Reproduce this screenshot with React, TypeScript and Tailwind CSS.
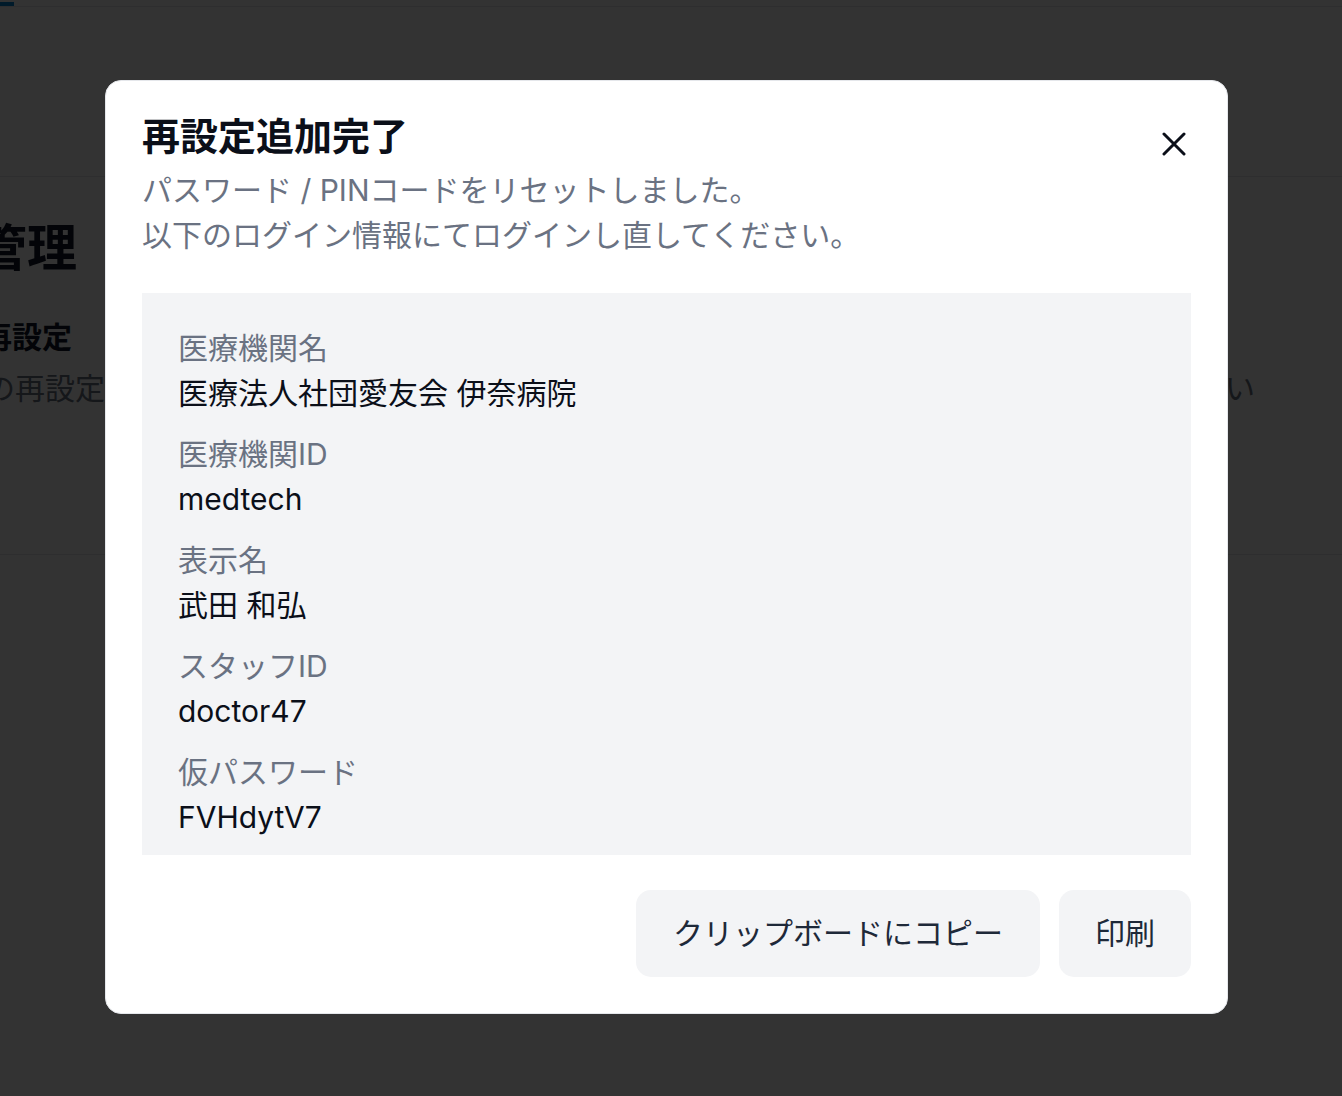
import React from "react";

type Field = { label: string; value: string };

const fields: Field[] = [
  { label: "医療機関名", value: "医療法人社団愛友会 伊奈病院" },
  { label: "医療機関ID", value: "medtech" },
  { label: "表示名", value: "武田 和弘" },
  { label: "スタッフID", value: "doctor47" },
  { label: "仮パスワード", value: "FVHdytV7" },
];

const font = {
  fontFamily: 'Inter, "Noto Sans CJK JP", sans-serif',
};

const CloseIcon = () => (
  <svg width="24" height="24" viewBox="0 0 24 24" fill="none">
    <path
      d="M2 2L22 22M22 2L2 22"
      stroke="#0b0f19"
      strokeWidth="3"
      strokeLinecap="round"
    />
  </svg>
);

const StaffPage = () => {
  return (
    <div className="min-h-screen overflow-hidden bg-white text-gray-900">
      {/* tab nav */}
      <div className="relative h-[7px] border-b border-gray-200">
        <div className="absolute bottom-0 left-0 h-[4px] w-[14px] bg-sky-600" />
      </div>
      <div className="h-[170px] border-b border-gray-200" />
      <div className="h-[378px] border-b border-gray-200 pt-[36px]">
        <h1 className="-ml-[223px] text-[50px] font-bold leading-[70px]">
          スタッフ管理
        </h1>
        <h2 className="-ml-[168px] mt-[32px] text-[30px] font-bold leading-[45px]">
          パスワード再設定
        </h2>
        <div className="-ml-[15px] mr-[87px] mt-[6px] flex justify-between text-[30px] leading-[45px] text-gray-500">
          <span>の再設定を行います。</span>
          <span>共有してください</span>
        </div>
      </div>
    </div>
  );
};

const ResetDoneModal = () => {
  return (
    <div className="fixed inset-0 bg-black/80">
      <div className="ml-[105px] mt-[80px] w-[1123px] rounded-[16px] border border-gray-200 bg-white px-[36px] pb-[36px] pt-[30px]">
        <div className="flex items-start justify-between">
          <div>
            <h2 className="mb-[7px] text-[38px] font-bold leading-[50px] text-[#0b0f19]">
              再設定追加完了
            </h2>
            <p className="text-[30px] leading-[45px] text-gray-500">
              パスワード / PINコードをリセットしました。
              <br />
              以下のログイン情報にてログインし直してください。
            </p>
          </div>
          <button className="mr-[5px] mt-[21px]">
            <CloseIcon />
          </button>
        </div>

        <div className="mt-[35px] flex flex-col gap-[16px] bg-[#f3f4f6] px-[36px] pb-[15px] pt-[33px]">
          {fields.map((f) => (
            <div key={f.label} className="text-[30px] leading-[45px]">
              <div className="text-gray-500">{f.label}</div>
              <div className="text-[#0b0f19]">{f.value}</div>
            </div>
          ))}
        </div>

        <div className="mt-[35px] flex justify-end gap-[19px]">
          <button className="h-[87px] rounded-[15px] bg-[#f3f4f6] px-[37px] text-[30px] text-gray-800">
            クリップボードにコピー
          </button>
          <button className="h-[87px] rounded-[15px] bg-[#f3f4f6] px-[36px] text-[30px] text-gray-800">
            印刷
          </button>
        </div>
      </div>
    </div>
  );
};

export default function App() {
  return (
    <div style={font}>
      <StaffPage />
      <ResetDoneModal />
    </div>
  );
}
